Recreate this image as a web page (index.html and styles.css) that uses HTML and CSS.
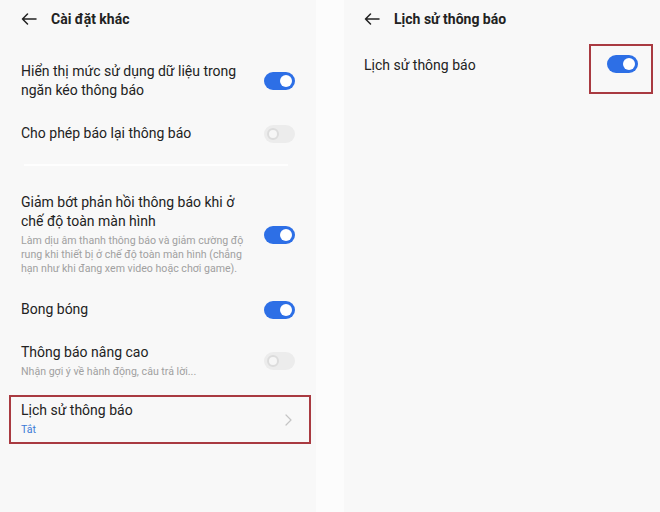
FILE: index.html
```html
<!DOCTYPE html>
<html lang="vi">
<head>
<meta charset="utf-8">
<link rel="stylesheet" href="styles.css">
</head>
<body>
<div class="page">
  <section class="panel left">
    <header class="hdr">
      <svg class="back" width="16" height="12" viewBox="0 0 16 12"><path d="M15 6H1.5M6.5 1L1.5 6l5 5" fill="none" stroke="#222" stroke-width="1.5" stroke-linecap="round" stroke-linejoin="round"/></svg>
      <h1 class="title">Cài đặt khác</h1>
    </header>

    <div class="row r1">
      <div class="txt"><div class="main">Hiển thị mức sử dụng dữ liệu trong<br>ngăn kéo thông báo</div></div>
      <span class="tg on"></span>
    </div>
    <div class="row r2">
      <div class="txt"><div class="main">Cho phép báo lại thông báo</div></div>
      <span class="tg off"></span>
    </div>
    <div class="divider"></div>
    <div class="row r3">
      <div class="txt">
        <div class="main">Giảm bớt phản hồi thông báo khi ở<br>chế độ toàn màn hình</div>
        <div class="sub">Làm dịu âm thanh thông báo và giảm cường độ<br>rung khi thiết bị ở chế độ toàn màn hình (chẳng<br>hạn như khi đang xem video hoặc chơi game).</div>
      </div>
      <span class="tg on"></span>
    </div>
    <div class="row r4">
      <div class="txt"><div class="main">Bong bóng</div></div>
      <span class="tg on"></span>
    </div>
    <div class="row r5">
      <div class="txt">
        <div class="main">Thông báo nâng cao</div>
        <div class="sub">Nhận gợi ý về hành động, câu trả lời...</div>
      </div>
      <span class="tg off"></span>
    </div>
    <div class="row r6 boxed">
      <div class="txt">
        <div class="main">Lịch sử thông báo</div>
        <div class="sub blue">Tắt</div>
      </div>
      <svg class="chev" width="7" height="12" viewBox="0 0 7 12"><path d="M1 1l5 5-5 5" fill="none" stroke="#c4c4c4" stroke-width="1.2" stroke-linecap="round" stroke-linejoin="round"/></svg>
    </div>
  </section>

  <div class="gap"></div>

  <section class="panel right">
    <header class="hdr">
      <svg class="back" width="16" height="12" viewBox="0 0 16 12"><path d="M15 6H1.5M6.5 1L1.5 6l5 5" fill="none" stroke="#222" stroke-width="1.5" stroke-linecap="round" stroke-linejoin="round"/></svg>
      <h1 class="title">Lịch sử thông báo</h1>
    </header>
    <div class="row rr">
      <div class="txt"><div class="main">Lịch sử thông báo</div></div>
      <div class="tgbox"><span class="tg on"></span></div>
    </div>
  </section>
</div>
</body>
</html>
```

FILE: styles.css
```css
* { box-sizing: border-box; margin: 0; padding: 0; }
html, body { width: 660px; height: 512px; overflow: hidden; }
body { background: #fcfcfc; font-family: Roboto, "Noto Sans", "Liberation Sans", sans-serif; color: #222; }

.page { display: flex; height: 512px; }
.panel { width: 316px; height: 512px; background: #f8f8f8; }
.gap { width: 28px; background: #fcfcfc; }

.left { padding: 0 21px; }
.right { padding: 0 22px 0 20px; }

.hdr { height: 38px; display: flex; align-items: center; }
.back { display: block; margin-right: 14px; }
.title { font-size: 14px; font-weight: 700; line-height: 19px; color: #222; }

.row { display: flex; align-items: center; justify-content: space-between; }
.txt { flex: 1; }
.main { font-size: 14px; line-height: 19px; color: #222; }
.sub { font-size: 10.6px; line-height: 14px; color: #a0a0a0; margin-top: 3px; }
.sub.blue { color: #3d7ad6; }

.tg { display: block; position: relative; width: 31px; height: 18px; border-radius: 9px; flex: none; }
.tg::after { content: ""; position: absolute; top: 3px; width: 12px; height: 12px; border-radius: 50%; box-sizing: border-box; }
.tg.on { background: #2d6fe6; }
.tg.on::after { right: 3px; background: #fff; }
.tg.off { background: #ececec; }
.tg.off::after { left: 3px; background: #f6f6f6; border: 2px solid #dcdcdc; }

.r1 { margin-top: 24px; }
.r2 { margin-top: 24px; }
.divider { height: 2px; background: #fefefe; margin: 21px 7px 0 3px; }
.r3 { margin-top: 27px; }
.r4 { margin-top: 24px; }
.r5 { margin-top: 24px; }
.boxed { margin: 16px -16px 0 -12px; padding: 4px 17px 5px 10px; border: 2px solid #a93a41; height: 49px; }
.chev { display: block; margin-top: 2px; }

.rr { margin-top: 6px; align-items: flex-start; }
.rr .main { margin-top: 12px; }
.tgbox { border: 2px solid #a93a41; padding: 9px 13px 19px 16px; margin-right: -15px; }
```
